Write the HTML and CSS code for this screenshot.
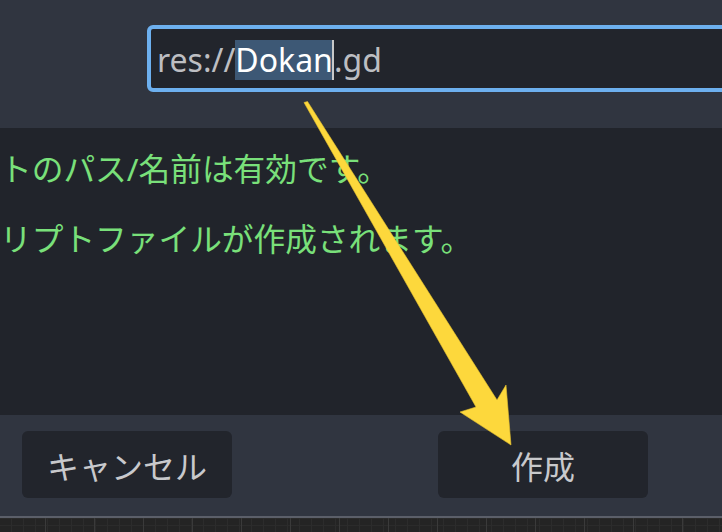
FILE: index.html
```html
<!DOCTYPE html>
<html>
<head>
<meta charset="utf-8"/>
<title>スクリプトを作成</title>
<link rel="stylesheet" href="styles.css">
</head>
<body>
<div class="dialog">
	<div class="pathRow">
		<div class="pathBox">res://<span class="sel">Dokan</span><span class="caret"></span>.gd</div>
	</div>

	<div class="msgArea">
		<p class="ok">トのパス/名前は有効です。</p>
		<p class="ok">リプトファイルが作成されます。</p>
	</div>

	<div class="btnRow">
		<div class="btn cancel">キャンセル</div>
		<div class="btn create">作成</div>
	</div>
	<div class="sep"></div>
	<div class="grid"></div>
</div>

<!-- yellow annotation arrow over the dialog -->
<svg class="arrow" width="722" height="532" viewBox="0 0 722 532">
	<polygon points="304,102.5 307.5,101.5 497,400 506,385 511,445 460,412 476,407"
		fill="#fdd83c" stroke="#e8c230" stroke-width="0.6" stroke-linejoin="round"/>
</svg>
</body>
</html>
```

FILE: styles.css
```css
html, body { margin: 0; padding: 0; background: #262626; }
body { font-family: "Noto Sans", "Noto Sans CJK JP", sans-serif; width: 722px; height: 532px; overflow: hidden; position: relative; }

.dialog { display: flex; flex-direction: column; height: 532px; }

.pathRow { background: #303540; height: 128px; padding-top: 25px; padding-left: 147px; box-sizing: border-box; overflow: hidden; }
.pathBox { height: 67px; box-sizing: border-box; margin-right: -12px;
	border: 4px solid #6db0ef; border-radius: 6px; background: #22252c;
	color: #bdbec2; font-size: 32px; line-height: 61px; padding-left: 6px;
	white-space: nowrap; }
.sel { background: #3d5875; color: #ffffff; display: inline-block; line-height: 40px; }
.caret { display: inline-block; width: 2px; height: 40px; background: #c8c8c8; vertical-align: -8px; margin-left: -1px; }

.msgArea { background: #21242b; height: 287px; padding: 20px 0 0 0; box-sizing: border-box; overflow: hidden; }
.ok { margin: 0 0 29px 0; color: #79e07a; font-size: 31.7px; line-height: 41px; white-space: nowrap; }

.btnRow { background: #303540; height: 101px; display: flex; padding: 16px 0 0 22px; gap: 206px; box-sizing: border-box; }
.btn { width: 210px; height: 67px; border-radius: 6px; background: #22252c;
	color: #c8c9cc; font-size: 32px; display: flex; align-items: center; justify-content: center; }

.sep { height: 2px; background: #5b5f69; }
.grid { flex: 1;
	background-color: #242424;
	background-image:
		repeating-linear-gradient(90deg, transparent 0 45px, #3a3a3a 45px 46px, transparent 46px 49px),
		repeating-linear-gradient(90deg, transparent 0 11px, #2c2c2c 11px 12px),
		repeating-linear-gradient(0deg, transparent 0 6px, #2b2b2b 6px 7px); }

.arrow { position: absolute; left: 0; top: 0; pointer-events: none; }
```
